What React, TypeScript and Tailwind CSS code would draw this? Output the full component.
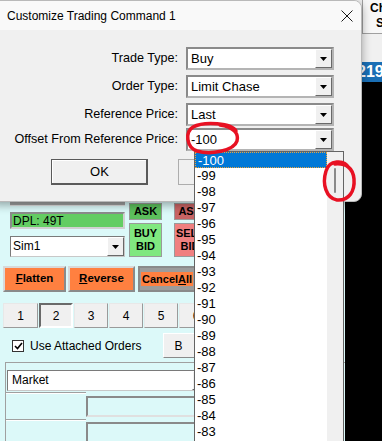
import React from "react";

const OFFSETS = Array.from({ length: 18 }, (_, i) => -100 + i);

const Arrow = () => (
  <div className="flex h-full w-[17px] items-center justify-center border border-t-white border-l-white border-r-[#696969] border-b-[#696969] bg-[#f0f0f0]">
    <svg width="7" height="4" viewBox="0 0 7 4">
      <path d="M0 0h7L3.5 4z" fill="#000" />
    </svg>
  </div>
);

const Combo = ({ value }: { value: string }) => (
  <div className="flex h-[23px] w-[148px] border-2 border-t-[#8a8a8a] border-l-[#8a8a8a] border-r-[#b4b4b4] border-b-[#b4b4b4] bg-white">
    <span className="flex-1 pl-[3px] text-[13px] leading-[19px]">{value}</span>
    <Arrow />
  </div>
);

const Dialog = () => (
  <div className="absolute left-[-8px] top-0 h-[202px] w-[370px] overflow-hidden rounded-r-[8px] border border-[#b9b9b9] bg-[#f0f0f0] shadow-[0_3px_10px_rgba(0,0,0,0.35)]">
    <div className="flex h-[29px] items-center justify-between bg-[#f9f9f9] pl-[14px] pr-[8px]">
      <span className="text-[12px]">Customize Trading Command 1</span>
      <svg width="12" height="12" viewBox="0 0 12 12">
        <path d="M0.5 0.5l11 11M11.5 0.5l-11 11" stroke="#1a1a1a" strokeWidth="1" />
      </svg>
    </div>

    {[
      ["Trade Type:", "Buy", "mt-[17px]"],
      ["Order Type:", "Limit Chase", "mt-[5px]"],
      ["Reference Price:", "Last", "mt-[5px]"],
      ["Offset From Reference Price:", "-100", "mt-[2px]"],
    ].map(([label, value, mt]) => (
      <div key={label} className={`flex items-center ${mt}`}>
        <span className="w-[193px] pr-[8px] text-right text-[12.6px]">{label}</span>
        <Combo value={value} />
      </div>
    ))}

    <div className="mt-[8px] flex pl-[58px]">
      <button className="h-[26px] w-[97px] border border-[#5a5a5a] bg-[#f0f0f0] text-[13px] shadow-[inset_-1px_-1px_0_#5a5a5a,inset_1px_1px_0_#ffffff]">
        OK
      </button>
      <button className="ml-[30px] h-[26px] w-[97px] border border-[#adadad] bg-[#f0f0f0] text-[13px]">
        Cancel
      </button>
    </div>
  </div>
);

const MainPanel = () => (
  <div className="h-full w-[345px] shrink-0 bg-[#dcf9f9] pt-[196px] text-[12px]">
    <div className="flex">
      <div className="ml-[10px] w-[115px]">
        <div className="h-[10px] border-b border-[#e0e0e0] bg-[#a0a0a0]" />
        <div className="mt-[6px] h-[17px] border-2 border-t-[#8c8c8c] border-l-[#8c8c8c] border-r-[#d0d0d0] border-b-[#d0d0d0] bg-[#63cd63] pl-[1px] text-[12px] leading-[14px]">
          DPL: 49T
        </div>
        <div className="mt-[7px] flex h-[21px] border border-t-[#7a7a7a] border-l-[#7a7a7a] border-r-[#c8c8c8] border-b-[#c8c8c8] bg-white">
          <span className="flex-1 pl-[2px] leading-[19px]">Sim1</span>
          <Arrow />
        </div>
      </div>

      <div className="ml-[4px] mt-[7px] w-[33px] text-[11px] font-bold">
        <div className="flex h-[17px] items-center justify-center border border-[#9a9a9a] bg-[#5cbf5c]">ASK</div>
        <div className="mt-[3px] flex h-[34px] flex-col items-center justify-center border border-[#9a9a9a] bg-[#80e880] leading-[13px]">
          <span>BUY</span>
          <span>BID</span>
        </div>
      </div>

      <div className="ml-[12px] mt-[7px] w-[32px] text-[11px] font-bold">
        <div className="flex h-[17px] items-center justify-center border border-[#9a9a9a] bg-[#c86464]">ASK</div>
        <div className="mt-[3px] flex h-[34px] flex-col items-center justify-center border border-[#9a9a9a] bg-[#f08080] leading-[13px]">
          <span>SELL</span>
          <span>BID</span>
        </div>
      </div>
    </div>

    <div className="mt-[9px] flex h-[26px] text-[11.5px] font-bold">
      <div className="ml-[3px] flex w-[63px] items-center justify-center border-2 border-t-[#d8d8d8] border-l-[#d8d8d8] border-r-[#8a8a8a] border-b-[#8a8a8a] bg-[#ff8040]">
        <span><u>F</u>latten</span>
      </div>
      <div className="ml-[2px] flex w-[67px] items-center justify-center border-2 border-t-[#d8d8d8] border-l-[#d8d8d8] border-r-[#8a8a8a] border-b-[#8a8a8a] bg-[#ff8040]">
        <span><u>R</u>everse</span>
      </div>
      <div className="ml-[3px] flex w-[62px] items-center border-2 border-[#8a8a8a] bg-[#9c9c9c] pl-[1px]">
        <span className="bg-[#ff8040] px-[1px] leading-[14px] text-[11px]">
          Cancel<u>A</u>ll
        </span>
      </div>
    </div>

    <div className="mt-[11px] flex h-[25px] text-[12px]">
      {["1", "2", "3", "4", "5", "6"].map((n, i) => (
        <div
          key={n}
          className={`flex items-center justify-center bg-[#f0f0f0] ${i === 0 ? "ml-[3px] w-[35px]" : "ml-[1px] w-[34px]"} ${
            i === 1
              ? "border-2 border-t-[#6a6a6a] border-l-[#6a6a6a] border-r-white border-b-white"
              : "border border-t-[#e8e8e8] border-l-[#e8e8e8] border-r-[#9a9a9a] border-b-[#9a9a9a]"
          }`}
        >
          {n}
        </div>
      ))}
    </div>

    <div className="mt-[5px] flex h-[25px] items-center">
      <div className="ml-[12px] flex h-[12px] w-[12px] items-center justify-center border border-[#333] bg-white">
        <svg width="9" height="8" viewBox="0 0 9 8">
          <path d="M1 4l2.5 2.5L8 1" stroke="#000" strokeWidth="1.6" fill="none" />
        </svg>
      </div>
      <span className="ml-[6px] text-[12px]">Use Attached Orders</span>
      <div className="ml-[22px] flex h-full w-[40px] items-center border border-t-white border-l-white border-r-[#8a8a8a] border-b-[#8a8a8a] bg-[#f0f0f0] pl-[10px] text-[12px]">
        B
      </div>
    </div>

    <div className="ml-[5px] mt-[4px] border-l border-t border-[#a0a0a0]">
      <div className="ml-[1px] mt-[7px] flex h-[21px] w-[203px] border border-t-[#7a7a7a] border-l-[#7a7a7a] border-r-[#c8c8c8] border-b-[#c8c8c8] bg-white">
        <span className="flex-1 pl-[4px] leading-[19px]">Market</span>
        <Arrow />
      </div>
      <div className="mt-[1px] flex">
        <div className="h-[2px] w-[80px] border-t border-b border-t-[#a0a0a0] border-b-white" />
        <div className="mt-[4px] h-[21px] w-[124px] border-2 border-t-[#8a8a8a] border-l-[#8a8a8a] border-r-[#e0e0e0] border-b-[#e0e0e0]" />
      </div>
      <div className="mt-[2px] flex">
        <div className="h-[2px] w-[80px] border-t border-b border-t-[#a0a0a0] border-b-white" />
        <div className="mt-[3px] h-[21px] w-[124px] border-2 border-t-[#8a8a8a] border-l-[#8a8a8a] border-r-[#e0e0e0] border-b-[#e0e0e0]" />
      </div>
    </div>
  </div>
);

const SidePanel = () => (
  <div className="flex w-[37px] flex-col">
    <div className="h-[33px] bg-[#f0f0f0] pl-[17px]">
      <div className="h-full border-l border-[#a0a0a0] bg-[#f7f7f7] text-[12px] font-bold leading-[15px]">
        <div className="pl-[7px] pt-[1px]">Ch</div>
        <div className="pl-[13px]">S</div>
      </div>
    </div>
    <div className="h-[29px] border-t border-[#a0a0a0] bg-[#f0f0f0]" />
    <div className="h-[20px] bg-[#1a6fb5] pl-[12px] text-[16px] font-bold leading-[20px] text-white">219</div>
  </div>
);

const DropList = () => (
  <div className="absolute left-[194px] top-[151px] flex h-[300px] w-[150px] border border-[#646464] bg-white text-[13px]">
    <div className="w-[132px]">
      {OFFSETS.map((v, i) => (
        <div
          key={v}
          className={`h-[16px] pl-[2px] leading-[16px] ${
            i === 0 ? "border border-dotted border-[#e8a33d] bg-[#0078d7] pl-[1px] leading-[14px] text-white" : ""
          }`}
        >
          {v}
        </div>
      ))}
    </div>
    <div className="w-[16px] bg-[#f0f0f0] pl-[7px] pt-[16px]">
      <div className="h-[25px] w-[2px] rounded-full bg-[#8a8a8a]" />
    </div>
  </div>
);

const Annotations = () => (
  <svg className="pointer-events-none absolute inset-0" width="382" height="441" viewBox="0 0 382 441">
    <g stroke="#e81123" strokeWidth="3.5" fill="none" strokeLinecap="round">
      <path d="M236 131C232 123 204 121 193 127C185 132 186 147 197 151C210 155 234 151 237 141C239 134 234 127 220 125" />
      <path d="M349 168C344 159 329 160 326 171C322 184 326 198 337 200C349 201 355 191 354 179C353 168 346 163 335 164" />
    </g>
  </svg>
);

export default function App() {
  return (
    <div className="relative h-[441px] w-[382px] overflow-hidden bg-black font-['Liberation_Sans',Arial,sans-serif] text-black">
      <div className="flex h-full">
        <MainPanel />
        <SidePanel />
      </div>
      <Dialog />
      <DropList />
      <Annotations />
    </div>
  );
}
